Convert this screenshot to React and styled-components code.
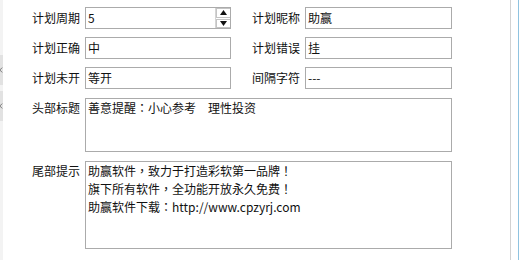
import styled, { createGlobalStyle } from "styled-components";

const GlobalStyle = createGlobalStyle`
  html, body {
    margin: 0;
    padding: 0;
    background: #ffffff;
  }
  body {
    font-family: "Noto Sans CJK SC", "Noto Sans", sans-serif;
    font-size: 12px;
    color: #111;
  }
`;

const Page = styled.div`
  display: flex;
  height: 260px;
  width: 527px;
  overflow: hidden;
`;

const Edge = styled.div`
  width: 3px;
  flex: none;
  background: #f3f3f3;
  display: flex;
  flex-direction: column;
  padding-top: 55px;
  gap: 6px;
`;

const EdgeTab = styled.div`
  height: 30px;
  background: #e2e2e2;
  display: flex;
  align-items: center;
  overflow: hidden;
`;

const Form = styled.div`
  width: 449px;
  flex: none;
  display: grid;
  grid-template-columns: 77px 146px 64px 147px;
  grid-auto-rows: min-content;
  column-gap: 5px;
  row-gap: 8px;
  padding-top: 7px;
  align-content: start;
`;

const Label = styled.div`
  text-align: right;
  white-space: nowrap;
  line-height: ${(p) => (p.$top ? "18px" : "22px")};
  align-self: ${(p) => (p.$top ? "start" : "center")};
  padding-top: ${(p) => (p.$top ? "1px" : "0")};
  margin-top: ${(p) => (p.$top ? "1px" : "0")};
`;

const Field = styled.div`
  height: 22px;
  box-sizing: border-box;
  border: 1px solid #ababab;
  background: #fff;
  display: flex;
  align-items: center;
`;

const FieldText = styled.span`
  flex: 1;
  padding-left: 2px;
  line-height: 20px;
  white-space: nowrap;
`;

const Spinner = styled.div`
  width: 14px;
  height: 20px;
  flex: none;
  display: flex;
  flex-direction: column;
  gap: 1px;
  border-left: 1px solid #d4d4d4;
  background: #fff;
`;

const SpinButton = styled.div`
  flex: 1;
  box-sizing: border-box;
  border: 1px solid #c4c4c4;
  border-right: none;
  display: flex;
  align-items: center;
  justify-content: center;
`;

const Memo = styled.div`
  grid-column: 2 / span 3;
  height: ${(p) => p.$h}px;
  margin-top: 1px;
  box-sizing: border-box;
  border: 1px solid #ababab;
  padding: 0 2px;
  line-height: 18px;
  white-space: pre;
`;

// full-width punctuation sits centred in the original font
const Punct = styled.span`
  font-family: "Noto Sans CJK TC", "Noto Sans CJK SC", sans-serif;
`;

const Spacer = styled.div`
  width: 58px;
  flex: none;
`;

const VLine = styled.div`
  width: 1px;
  flex: none;
  background: ${(p) => p.$color};
`;

const Gap = styled.div`
  width: 7px;
  flex: none;
`;

const Arrow = ({ up }) => (
  <svg width="7" height="5" viewBox="0 0 7 5">
    <path d={up ? "M3.5 0L7 5H0z" : "M0 0h7L3.5 5z"} fill="#111" />
  </svg>
);

const Chevron = () => (
  <svg width="5" height="8" viewBox="0 0 5 8" style={{ marginLeft: "-1px" }}>
    <path d="M4 1L1 4l3 3" stroke="#777" strokeWidth="1.2" fill="none" />
  </svg>
);

const withPunct = (text) =>
  text.split(/([，：！])/).map((part, i) =>
    /^[，：！]$/.test(part) ? <Punct key={i}>{part}</Punct> : part
  );

const footerLines = [
  "助赢软件，致力于打造彩软第一品牌！",
  "旗下所有软件，全功能开放永久免费！",
  "助赢软件下载：http://www.cpzyrj.com",
];

const App = () => {
  return (
    <>
      <GlobalStyle />
      <Page>
        <Edge>
          <EdgeTab>
            <Chevron />
          </EdgeTab>
          <EdgeTab>
            <Chevron />
          </EdgeTab>
        </Edge>
        <Form>
          <Label>计划周期</Label>
          <Field>
            <FieldText>5</FieldText>
            <Spinner>
              <SpinButton>
                <Arrow up />
              </SpinButton>
              <SpinButton>
                <Arrow />
              </SpinButton>
            </Spinner>
          </Field>
          <Label>计划昵称</Label>
          <Field>
            <FieldText>助赢</FieldText>
          </Field>

          <Label>计划正确</Label>
          <Field>
            <FieldText>中</FieldText>
          </Field>
          <Label>计划错误</Label>
          <Field>
            <FieldText>挂</FieldText>
          </Field>

          <Label>计划未开</Label>
          <Field>
            <FieldText>等开</FieldText>
          </Field>
          <Label>间隔字符</Label>
          <Field>
            <FieldText>---</FieldText>
          </Field>

          <Label $top>头部标题</Label>
          <Memo $h={54}>{withPunct("善意提醒：小心参考　理性投资")}</Memo>

          <Label $top>尾部提示</Label>
          <Memo $h={88}>
            {footerLines.map((line, i) => (
              <div key={i}>{withPunct(line)}</div>
            ))}
          </Memo>
        </Form>
        <Spacer />
        <VLine $color="#d2d2d2" />
        <Gap />
        <VLine $color="#8fc3e0" />
      </Page>
    </>
  );
};

export default App;
